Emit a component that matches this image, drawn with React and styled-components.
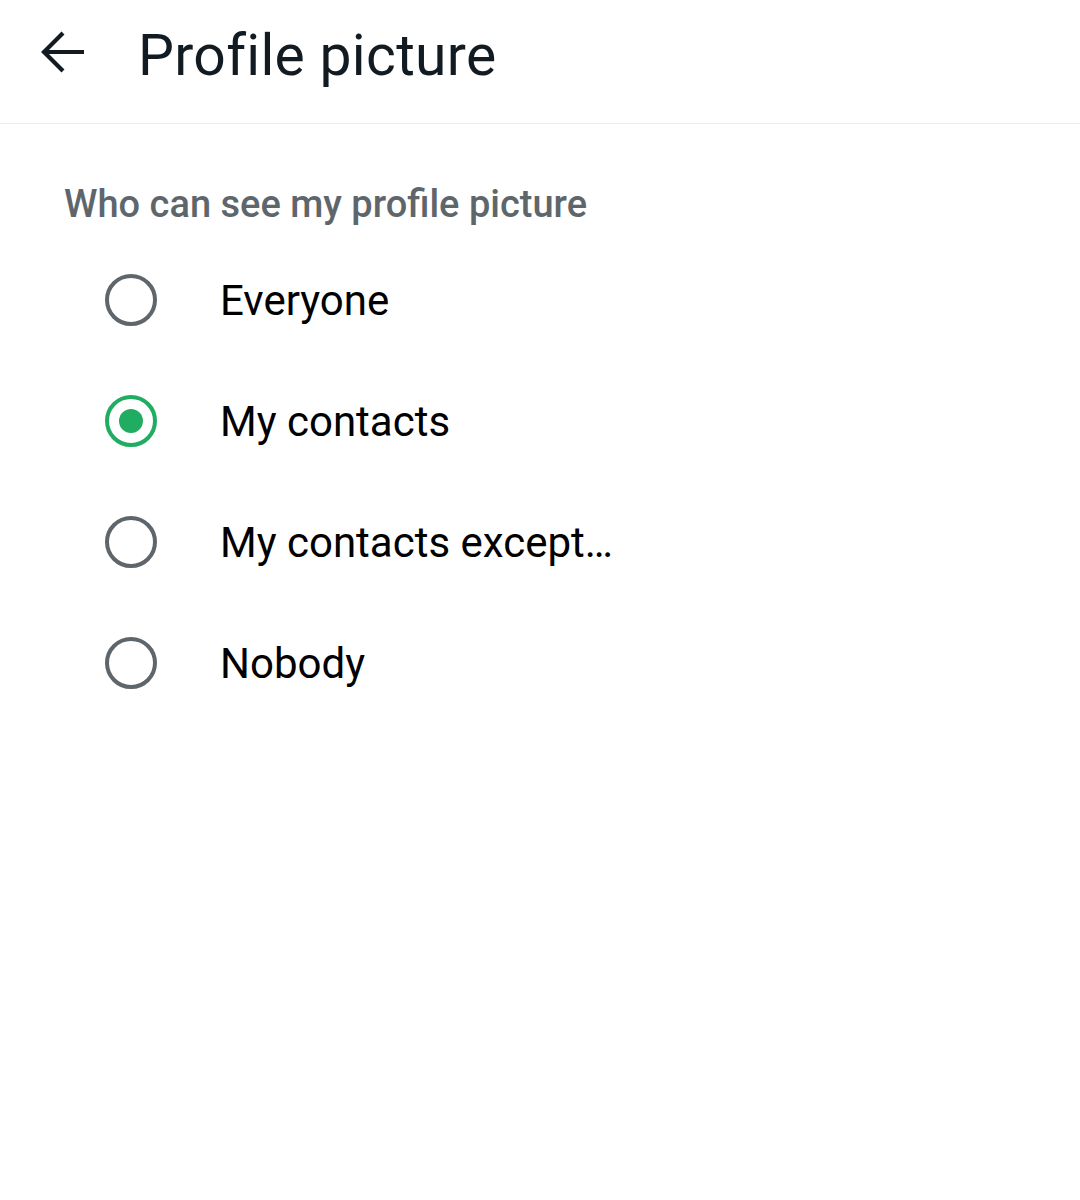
import React, { useState } from 'react';
import styled, { createGlobalStyle } from 'styled-components';

const GlobalStyle = createGlobalStyle`
  body {
    margin: 0;
    background: #ffffff;
    font-family: Roboto, "Noto Sans", sans-serif;
  }
`;

const Page = styled('div')`
  width: 1080px;
  min-height: 1200px;
  background: #ffffff;
`;

const Header = styled('div')`
  height: 124px;
  display: flex;
  align-items: center;
  border-bottom: solid 1px #ebebeb;
  box-sizing: border-box;
`;

const BackButton = styled('button')`
  width: 138px;
  height: 110px;
  padding: 0 0 20px 40px;
  border: none;
  background: none;
  display: flex;
  align-items: center;
  cursor: pointer;
`;

const Title = styled('h1')`
  margin: 0 0 12px;
  font-size: 57px;
  font-weight: 400;
  color: #111b21;
  letter-spacing: 0.3px;
`;

const Section = styled('div')`
  padding: 58px 0 0 64px;
`;

const SectionLabel = styled('div')`
  font-size: 38px;
  font-weight: 500;
  color: #5e666c;
  margin-bottom: 13px;
`;

const OptionList = styled('div')`
  display: flex;
  flex-direction: column;
`;

const Option = styled('label')`
  height: 121px;
  display: flex;
  align-items: center;
  padding-left: 41px;
  cursor: pointer;
`;

const Radio = styled('span')`
  width: 52px;
  height: 52px;
  box-sizing: border-box;
  border-radius: 50%;
  border: solid 4.5px ${(props) => (props.checked ? '#21ad61' : '#5e666c')};
  display: flex;
  justify-content: center;
  align-items: center;
  margin-right: 63px;

  &::after {
    content: '';
    width: 24px;
    height: 24px;
    border-radius: 50%;
    background: #21ad61;
    display: ${(props) => (props.checked ? 'block' : 'none')};
  }
`;

const OptionText = styled('span')`
  font-size: 42px;
  color: #000000;
  padding-top: 2px;
`;

const options = ['Everyone', 'My contacts', 'My contacts except…', 'Nobody'];

const App = () => {
  const [selected, setSelected] = useState(1);

  return (
    <Page>
      <GlobalStyle />
      <Header>
        <BackButton aria-label="Back">
          <svg width="46" height="46" viewBox="0 0 46 46">
            <path
              d="M44 23H5M23 4L4 23l19 19"
              fill="none"
              stroke="#111b21"
              strokeWidth="4.2"
            />
          </svg>
        </BackButton>
        <Title>Profile picture</Title>
      </Header>
      <Section>
        <SectionLabel>Who can see my profile picture</SectionLabel>
        <OptionList>
          {options.map((o, i) => (
            <Option key={o} onClick={() => setSelected(i)}>
              <Radio checked={selected === i} />
              <OptionText>{o}</OptionText>
            </Option>
          ))}
        </OptionList>
      </Section>
    </Page>
  );
};

export default App;
